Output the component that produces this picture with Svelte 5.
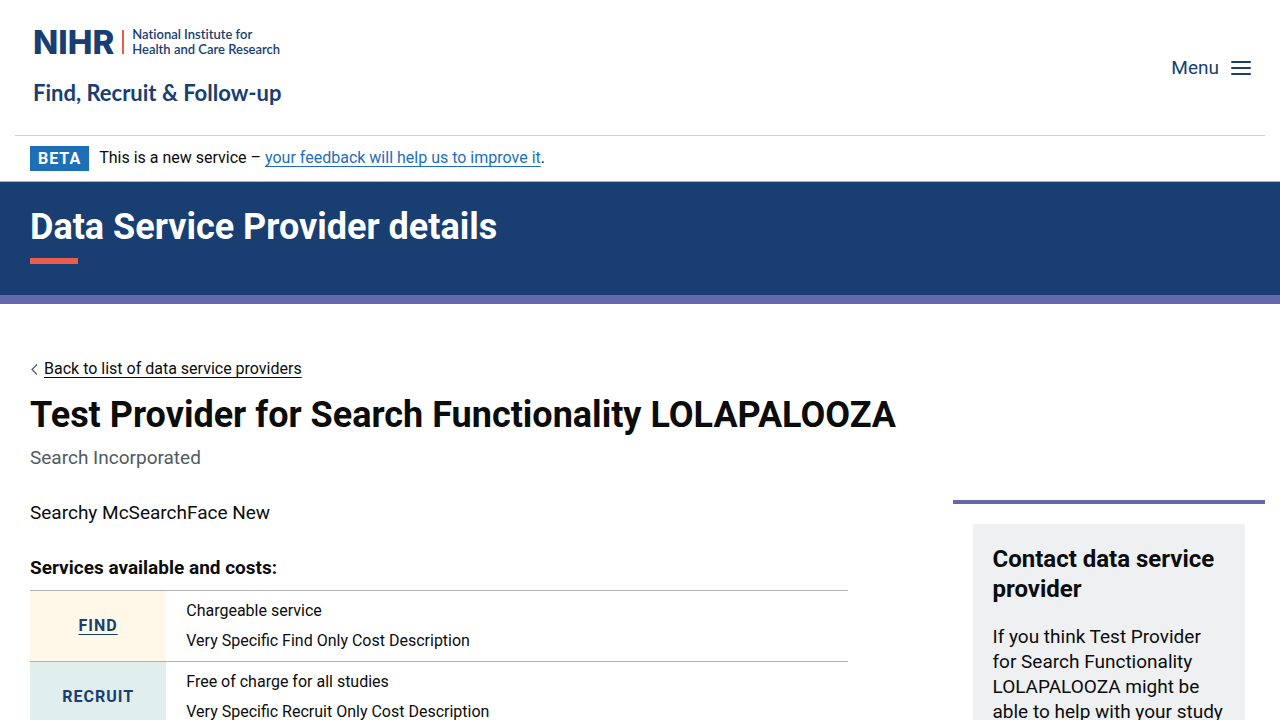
<script>
  const services = [
    {
      name: 'Find',
      href: '#find',
      tone: 'find',
      lines: ['Chargeable service', 'Very Specific Find Only Cost Description'],
    },
    {
      name: 'Recruit',
      href: null,
      tone: 'recruit',
      lines: ['Free of charge for all studies', 'Very Specific Recruit Only Cost Description'],
    },
  ];
</script>

<header class="header">
  <a class="logo" href="#home">
    <span class="logo-top">
      <span class="logo-mark">NIHR</span>
      <span class="logo-bar"></span>
      <span class="logo-name">National Institute for<br />Health and Care Research</span>
    </span>
    <span class="logo-service">Find, Recruit &amp; Follow-up</span>
  </a>
  <button class="menu" type="button">
    Menu
    <svg width="20" height="14" viewBox="0 0 20 14" aria-hidden="true">
      <path d="M1 1H19M1 7H19M1 13H19" stroke="currentColor" stroke-width="2" stroke-linecap="round" />
    </svg>
  </button>
</header>

<div class="phase">
  <strong class="tag">BETA</strong>
  <span>This is a new service – <a href="#feedback">your feedback will help us to improve it</a>.</span>
</div>

<div class="banner">
  <div class="banner-title">Data Service Provider details</div>
</div>

<div class="page">
  <main>
    <nav class="back" aria-label="Back">
      <svg width="8" height="12" viewBox="0 0 8 12" aria-hidden="true">
        <path d="M7 1.5L2 6.5L7 11.5" fill="none" stroke="#505a5f" stroke-width="1.2" />
      </svg>
      <a href="#list">Back to list of data service providers</a>
    </nav>
    <h1>Test Provider for Search Functionality LOLAPALOOZA</h1>
    <p class="caption">Search Incorporated</p>
  </main>

  <div class="columns">
    <section class="details">
      <p>Searchy McSearchFace New</p>
      <h2 id="services">Services available and costs:</h2>
      <table aria-labelledby="services">
        <tbody>
          {#each services as service}
            <tr>
              <th scope="row" class={service.tone}>
                {#if service.href}<a href={service.href}>{service.name}</a>{:else}{service.name}{/if}
              </th>
              <td>
                {#each service.lines as line}<p>{line}</p>{/each}
              </td>
            </tr>
          {/each}
        </tbody>
      </table>
    </section>

    <aside>
      <div class="card">
        <h2>Contact data service provider</h2>
        <p>If you think Test Provider for Search Functionality LOLAPALOOZA might be able to help with your study</p>
      </div>
    </aside>
  </div>
</div>

<style>
  :global(body) {
    background: #fff;
    color: #0b0c0c;
    font: 19px/25px Roboto, Arial, sans-serif;
  }

  h1, h2, p {
    margin: 0;
  }

  a {
    color: inherit;
    text-decoration: underline 1px;
    text-underline-offset: 3px;
    text-decoration-skip-ink: none;
  }

  .header {
    display: flex;
    align-items: center;
    justify-content: space-between;
    margin: 0 15px;
    padding: 26px 14px 26px 18px;
    border-bottom: 1px solid #cfd3d9;
    color: #193e72;
  }

  .logo {
    display: flex;
    flex-direction: column;
    gap: 24px;
    padding-bottom: 5px;
    font-family: Lato, sans-serif;
    font-variant-ligatures: none;
    text-decoration: none;
  }

  .logo-top {
    display: flex;
    align-items: center;
    height: 32px;
  }

  .logo-mark {
    font-family: Inter, sans-serif;
    font-size: 33px;
    font-weight: 800;
    line-height: 32px;
  }

  .logo-bar {
    width: 2px;
    height: 24px;
    margin: 0 8px;
    background: #ea5d4e;
  }

  .logo-name {
    font-size: 13px;
    font-weight: 600;
    line-height: 15px;
  }

  .logo-service {
    font-size: 22px;
    font-weight: 700;
    line-height: 22px;
  }

  .menu {
    display: flex;
    align-items: center;
    gap: 12px;
    padding: 0;
    border: 0;
    background: none;
    color: inherit;
    font: inherit;
    cursor: pointer;
  }

  .phase {
    display: flex;
    align-items: center;
    gap: 10px;
    padding: 10px 30px;
    border-bottom: 1px solid #b1b4b6;
    font-size: 16px;
    line-height: 20px;
  }

  .phase a {
    color: #1d70b8;
  }

  .phase span {
    padding-bottom: 2px;
  }

  .tag {
    padding: 0 8px;
    background: #1d70b8;
    color: #fff;
    letter-spacing: 1px;
    line-height: 25px;
  }

  .banner {
    padding: 25px 30px 31px;
    border-bottom: 9px solid #6667ad;
    background: #193e72;
    color: #fff;
  }

  .banner-title {
    font-size: 36px;
    font-weight: 700;
    line-height: 40px;
  }

  .banner-title::after {
    content: '';
    display: block;
    width: 48px;
    height: 6px;
    margin-top: 11px;
    background: #ea5d4e;
  }

  .page {
    padding: 55px 15px 0;
  }

  main {
    padding: 0 15px;
  }

  .back {
    display: flex;
    align-items: center;
    gap: 6px;
    font-size: 16px;
    line-height: 20px;
  }

  h1 {
    margin-top: 16px;
    font-size: 36px;
    line-height: 40px;
  }

  .caption {
    margin-top: 10px;
    color: #505a5f;
  }

  .columns {
    display: grid;
    grid-template-columns: 3fr 1fr;
    margin-top: 30px;
  }

  .details {
    padding: 0 105px 0 15px;
  }

  .details h2 {
    margin: 30px 0 10px;
    font-size: 19px;
    line-height: 25px;
  }

  table {
    width: 100%;
    border-collapse: collapse;
    font-size: 16px;
    line-height: 20px;
  }

  tr {
    border-top: 1px solid #b1b4b6;
  }

  th {
    width: 16.666%;
    padding: 0;
    color: #193e72;
    letter-spacing: 1px;
    text-transform: uppercase;
  }

  .find {
    background: #fff7e8;
  }

  .recruit {
    background: #e0eeee;
  }

  td {
    padding: 10px 20px;
  }

  td p + p {
    margin-top: 10px;
  }

  aside {
    padding: 20px;
    border-top: 4px solid #6667ad;
  }

  .card {
    padding: 20px;
    background: #eff0f2;
  }

  .card h2 {
    margin-bottom: 20px;
    font-size: 24px;
    line-height: 30px;
  }
</style>
